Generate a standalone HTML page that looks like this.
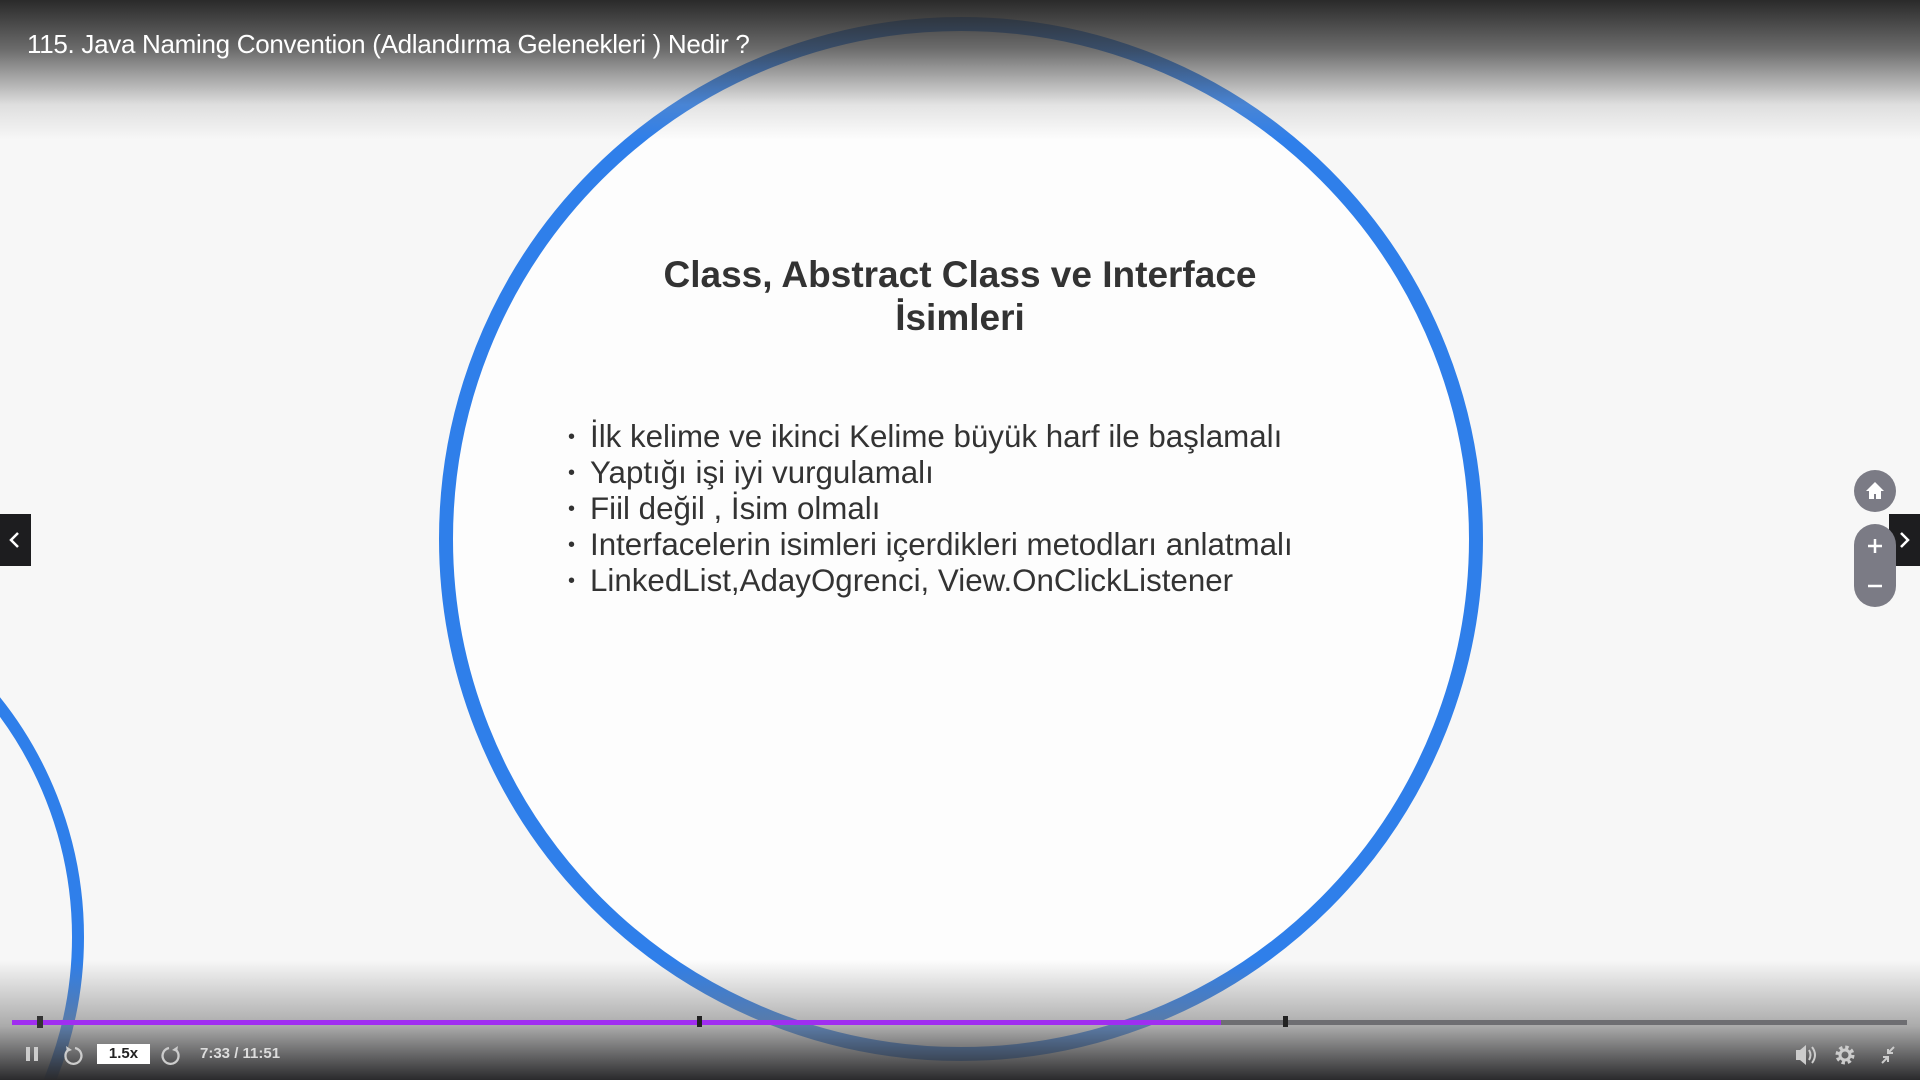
<!DOCTYPE html>
<html><head><meta charset="utf-8"><style>
*{margin:0;padding:0;box-sizing:border-box}
html,body{width:1920px;height:1080px;overflow:hidden}
body{background:#f7f7f7;font-family:"Liberation Sans",Arial,sans-serif;position:relative}
.abs{position:absolute}
.top{left:0;top:0;width:1920px;height:140px;background:linear-gradient(#2a2a2a 0%,rgba(60,60,60,.75) 35%,rgba(150,150,150,.25) 75%,rgba(247,247,247,0))}
.bot{left:0;top:960px;width:1920px;height:120px;background:linear-gradient(rgba(247,247,247,0),rgba(120,120,120,.6) 55%,#2a2a2c)}
.title{left:27px;top:29px;color:#fff;font-size:26px;letter-spacing:-.3px}
h1{position:absolute;left:560px;width:800px;text-align:center;top:253px;font-size:37px;line-height:43px;color:#333;font-weight:bold}
ul{position:absolute;left:568px;top:419px;list-style:none;color:#333;font-size:31.3px;line-height:36px}
li{height:36px;white-space:nowrap}
li:before{content:"•";font-size:20px;display:inline-block;width:22px;line-height:20px;vertical-align:4px}
.arrow{background:#1d1d1f;color:#fff;width:31px;height:52px;top:514px}
</style></head><body>
<svg class="abs" style="left:0;top:0" width="1920" height="1080">
<circle cx="961" cy="539" r="515" fill="#fdfdfd" stroke="#2f7fea" stroke-width="14"/>
<circle cx="-300" cy="937" r="378" fill="none" stroke="#2f7fea" stroke-width="12"/>
</svg>
<div class="abs top"></div>
<div class="abs title">115. Java Naming Convention (Adlandırma Gelenekleri ) Nedir ?</div>
<h1>Class, Abstract Class ve Interface<br>İsimleri</h1>
<ul>
<li>İlk kelime ve ikinci Kelime büyük harf ile başlamalı</li>
<li>Yaptığı işi iyi vurgulamalı</li>
<li>Fiil değil , İsim olmalı</li>
<li>Interfacelerin isimleri içerdikleri metodları anlatmalı</li>
<li>LinkedList,AdayOgrenci, View.OnClickListener</li>
</ul>
<div class="abs arrow" style="left:0"><svg width="31" height="52"><path d="M18 19l-7 7 7 7" stroke="#fff" stroke-width="2.5" fill="none"/></svg></div>
<div class="abs arrow" style="left:1889px"><svg width="31" height="52"><path d="M12 19l7 7-7 7" stroke="#fff" stroke-width="2.5" fill="none"/></svg></div>
<div class="abs" style="left:1854px;top:470px;width:42px;height:42px;border-radius:50%;background:#7b7b85"><svg width="42" height="42"><path d="M21 12l-9 9h3v8h5v-5h2v5h5v-8h3z" fill="#fff"/></svg></div>
<div class="abs" style="left:1854px;top:524px;width:42px;height:83px;border-radius:21px;background:#7b7b85"><svg width="42" height="83"><path d="M14 22h14M21 15v14M14 62h14" stroke="#fff" stroke-width="2.5"/></svg></div>
<div class="abs bot"></div>
<div class="abs" style="left:12px;top:1020px;width:1895px;height:5px;background:#6e6e72"></div>
<div class="abs" style="left:12px;top:1020px;width:1209px;height:5px;background:#a02ef0"></div>
<div class="abs" style="left:37px;top:1016px;width:6px;height:12px;background:#333"></div>
<div class="abs" style="left:697px;top:1016px;width:5px;height:11px;background:#222"></div>
<div class="abs" style="left:1283px;top:1016px;width:5px;height:11px;background:#222"></div>
<svg class="abs" style="left:0;top:1036px" width="300" height="36">
<rect x="26" y="11" width="4" height="14" fill="#ccc"/><rect x="34" y="11" width="4" height="14" fill="#ccc"/>
<path d="M68 14a8 8 0 1 0 7-2" stroke="#ccc" stroke-width="2.3" fill="none"/><path d="M66 10l1 6 5-2z" fill="#ccc"/>
<path d="M176 14a8 8 0 1 1 -7-2" stroke="#ccc" stroke-width="2.3" fill="none"/><path d="M178 10l-1 6-5-2z" fill="#ccc"/>
</svg>
<div class="abs" style="left:97px;top:1044px;width:53px;height:20px;background:#fff;color:#222;font-size:15px;font-weight:bold;text-align:center;line-height:20px">1.5x</div>
<div class="abs" style="left:200px;top:1045px;color:#ddd;font-size:15px;font-weight:bold">7:33 / 11:51</div>
<svg class="abs" style="left:1790px;top:1040px" width="120" height="30">
<path d="M6 10h4l6-5v20l-6-5H6z" fill="#ccc"/><path d="M19 10q3 5 0 10M22 7q6 8 0 16" stroke="#ccc" stroke-width="2" fill="none"/>
<circle cx="55" cy="15" r="7" fill="none" stroke="#ccc" stroke-width="5" stroke-dasharray="3 2.5"/><circle cx="55" cy="15" r="5" fill="none" stroke="#ccc" stroke-width="3"/>
<path d="M92 23l6-6M93 17h5v5M104 7l-6 6M98 9v4h5" stroke="#ccc" stroke-width="2" fill="none"/>
</svg>
</body></html>
